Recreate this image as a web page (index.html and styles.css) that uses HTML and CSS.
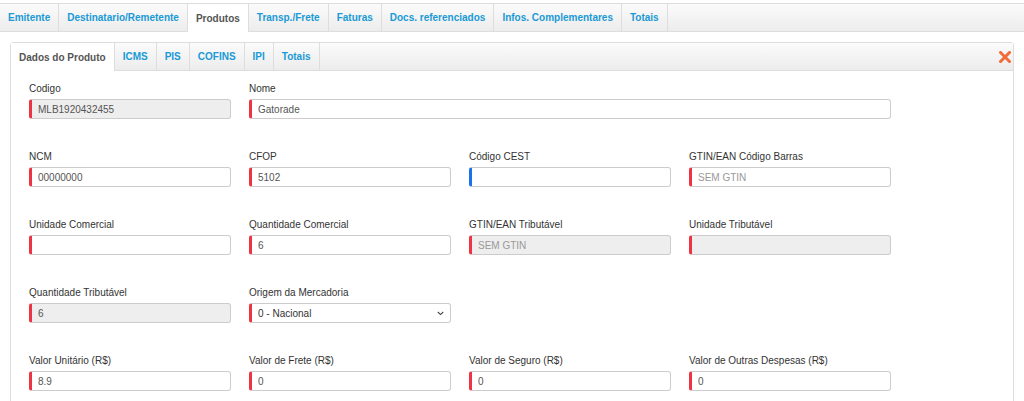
FILE: index.html
```html
<!DOCTYPE html>
<html lang="pt">
<head>
<meta charset="utf-8">
<title>Produto</title>
<link rel="stylesheet" href="styles.css">
</head>
<body>
<nav class="tabbar top">
  <a class="tab">Emitente</a>
  <a class="tab">Destinatario/Remetente</a>
  <a class="tab active">Produtos</a>
  <a class="tab">Transp./Frete</a>
  <a class="tab">Faturas</a>
  <a class="tab">Docs. referenciados</a>
  <a class="tab">Infos. Complementares</a>
  <a class="tab">Totais</a>
</nav>
<section class="panel">
  <div class="tabbar inner">
    <a class="tab active">Dados do Produto</a>
    <a class="tab">ICMS</a>
    <a class="tab">PIS</a>
    <a class="tab">COFINS</a>
    <a class="tab">IPI</a>
    <a class="tab">Totais</a>
    <span class="close"><svg width="12" height="12" viewBox="0 0 12 12"><path d="M1.5 1.5l9 9M10.5 1.5l-9 9" stroke="#f26b3a" stroke-width="3" stroke-linecap="square"/></svg></span>
  </div>
  <div class="form">
    <div class="field"><label>Codigo</label><input class="req" disabled value="MLB1920432455"></div>
    <div class="field span3"><label>Nome</label><input class="req" value="Gatorade"></div>

    <div class="field"><label>NCM</label><input class="req" value="00000000"></div>
    <div class="field"><label>CFOP</label><input class="req" value="5102"></div>
    <div class="field"><label>Código CEST</label><input class="opt" value=""></div>
    <div class="field"><label>GTIN/EAN Código Barras</label><input class="req" placeholder="SEM GTIN"></div>

    <div class="field"><label>Unidade Comercial</label><input class="req" value=""></div>
    <div class="field"><label>Quantidade Comercial</label><input class="req" value="6"></div>
    <div class="field"><label>GTIN/EAN Tributável</label><input class="req" disabled placeholder="SEM GTIN"></div>
    <div class="field"><label>Unidade Tributável</label><input class="req" disabled value=""></div>

    <div class="field"><label>Quantidade Tributável</label><input class="req" disabled value="6"></div>
    <div class="field"><label>Origem da Mercadoria</label>
      <div class="select req"><span>0 - Nacional</span>
        <svg width="7" height="5" viewBox="0 0 7 5"><path d="M0.8 1l2.7 2.6L6.2 1" fill="none" stroke="#444" stroke-width="1.1"/></svg>
      </div>
    </div>
    <div class="field empty"></div>
    <div class="field empty"></div>

    <div class="field"><label>Valor Unitário (R$)</label><input class="req" value="8.9"></div>
    <div class="field"><label>Valor de Frete (R$)</label><input class="req" value="0"></div>
    <div class="field"><label>Valor de Seguro (R$)</label><input class="req" value="0"></div>
    <div class="field"><label>Valor de Outras Despesas (R$)</label><input class="req" value="0"></div>
  </div>
</section>
</body>
</html>
```
FILE: styles.css
```css
* { box-sizing: border-box; }
body {
  margin: 0;
  font-family: "Liberation Sans", Arial, sans-serif;
  font-size: 10px;
  color: #333;
  background: #fff;
}
.tabbar {
  display: flex;
  align-items: stretch;
  background: linear-gradient(#fbfbfb, #ececec);
  border-bottom: 1px solid #ddd;
}
.tabbar.top {
  margin-top: 3px;
  border-top: 1px solid #ddd;
  height: 29px;
}
.tab {
  display: flex;
  align-items: center;
  padding: 0 8px;
  border-right: 1px solid #ddd;
  font-weight: bold;
  font-size: 10px;
  color: #1a9ad6;
  white-space: nowrap;
}
.tab.active {
  background: #fff;
  color: #555;
  margin-bottom: -1px;
}
.panel {
  margin: 10px 10px 0 10px;
  border: 1px solid #ddd;
  border-radius: 3px 3px 0 0;
}
.tabbar.inner {
  height: 28px;
}
.close {
  margin-left: auto;
  display: flex;
  align-items: center;
  padding-right: 2px;
}
.form {
  display: grid;
  grid-template-columns: repeat(4, 202px);
  column-gap: 18px;
  row-gap: 31px;
  padding: 11px 18px 20px 18px;
}
.field { display: flex; flex-direction: column; }
.span3 { grid-column: span 3; }
label {
  display: block;
  line-height: 13px;
  margin-bottom: 4px;
  color: #333;
}
input, .select {
  height: 20px;
  width: 100%;
  border: 1px solid #ccc;
  border-radius: 3px;
  font-family: "Liberation Sans", Arial, sans-serif;
  font-size: 10px;
  color: #555;
  padding: 0 6px;
  background: #fff;
  outline: none;
}
input:disabled { background: #eee; color: #555; }
input::placeholder { color: #999; }
.req { border-left: 3px solid #ee3344; }
.opt { border-left: 3px solid #1a73e8; }
.select {
  display: flex;
  align-items: center;
  justify-content: space-between;
  padding: 0 6px 0 6px;
  color: #333;
}
```
